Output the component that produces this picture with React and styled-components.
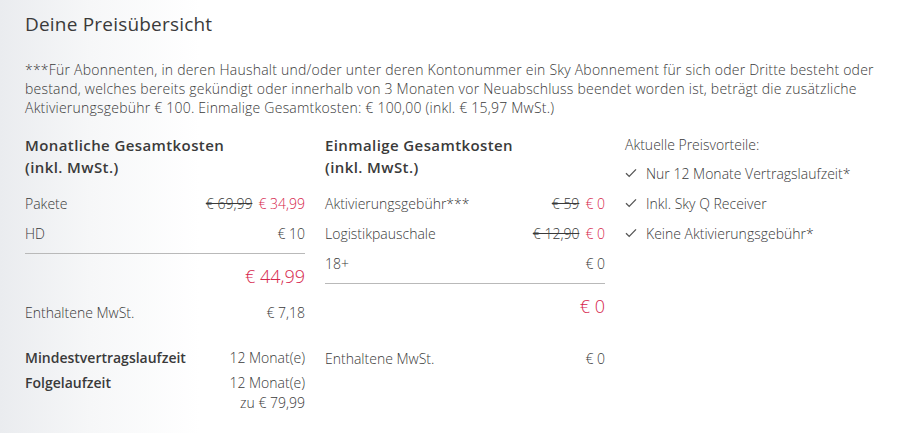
import styled, { createGlobalStyle } from 'styled-components';

const GlobalStyle = createGlobalStyle`
  html, body {
    margin: 0;
    padding: 0;
  }
  body {
    font-family: "Open Sans", "Liberation Sans", sans-serif;
    color: #3a3a3a;
    background: linear-gradient(to right, #eaecef 0px, #f6f7f8 90px, #ffffff 200px);
    min-height: 433px;
  }
`;

const Page = styled.div`
  padding: 12px 25px 0 25px;
  width: 918px;
  box-sizing: border-box;
`;

const Title = styled.h1`
  margin: 0;
  font-size: 19px;
  line-height: 24px;
  font-weight: 400;
  letter-spacing: 0.2px;
  color: #3a3a3a;
`;

const Note = styled.p`
  margin: 24px 0 0 0;
  font-size: 14px;
  line-height: 19px;
  font-weight: 300;
  letter-spacing: 0.22px;
  white-space: nowrap;
`;

const Columns = styled.div`
  display: grid;
  grid-template-columns: 280px 280px 1fr;
  column-gap: 20px;
  margin-top: 17px;
  align-items: start;
`;

const Column = styled.div`
  display: flex;
  flex-direction: column;
`;

const Heading = styled.h2`
  margin: 0 0 10px 0;
  font-size: 15px;
  line-height: 22px;
  font-weight: 600;
  letter-spacing: 0.4px;
  color: #3a3a3a;
`;

const Row = styled.div`
  display: flex;
  justify-content: space-between;
  align-items: center;
  height: 30px;
  font-size: 14px;
  font-weight: 300;
  margin-top: ${(p) => p.$gap || 0}px;
`;

const Prices = styled.span`
  display: flex;
  gap: 6px;
`;

const Old = styled.span`
  text-decoration: line-through;
`;

const Red = styled.span`
  color: #d6264c;
`;

const Divider = styled.hr`
  border: 0;
  border-top: 1px solid #b9b9b9;
  margin: 5px 0 7px 0;
`;

const Total = styled.div`
  text-align: right;
  font-size: 18px;
  line-height: 30px;
  font-weight: 300;
  color: #d6264c;
`;

const Terms = styled.div`
  display: flex;
  flex-direction: column;
  gap: 5px;
  margin-top: 21px;
`;

const TermRow = styled.div`
  display: flex;
  justify-content: space-between;
  font-size: 14px;
  line-height: 20px;
`;

const TermLabel = styled.span`
  font-weight: 600;
`;

const TermValue = styled.span`
  font-weight: 300;
  text-align: right;
`;

const BenefitsTitle = styled.div`
  font-size: 14px;
  line-height: 22px;
  font-weight: 300;
  margin-bottom: 2px;
`;

const Benefit = styled.div`
  display: flex;
  align-items: center;
  gap: 9px;
  height: 30px;
  font-size: 14px;
  font-weight: 300;
`;

const Check = () => (
  <svg width="12" height="10" viewBox="0 0 12 10" fill="none">
    <path d="M1 5.2 L4.2 8.4 L11 1.4" stroke="#555" strokeWidth="1.3" />
  </svg>
);

export default function App() {
  return (
    <>
      <GlobalStyle />
      <Page>
        <Title>Deine Preisübersicht</Title>
        <Note>
          ***Für Abonnenten, in deren Haushalt und/oder unter deren Kontonummer ein Sky Abonnement für sich oder Dritte besteht oder
          <br />
          bestand, welches bereits gekündigt oder innerhalb von 3 Monaten vor Neuabschluss beendet worden ist, beträgt die zusätzliche
          <br />
          Aktivierungsgebühr € 100. Einmalige Gesamtkosten: € 100,00 (inkl. € 15,97 MwSt.)
        </Note>
        <Columns>
          <Column>
            <Heading>
              Monatliche Gesamtkosten
              <br />
              (inkl. MwSt.)
            </Heading>
            <Row>
              <span>Pakete</span>
              <Prices>
                <Old>€ 69,99</Old>
                <Red>€ 34,99</Red>
              </Prices>
            </Row>
            <Row>
              <span>HD</span>
              <span>€ 10</span>
            </Row>
            <Divider />
            <Total>€ 44,99</Total>
            <Row $gap={6}>
              <span>Enthaltene MwSt.</span>
              <span>€ 7,18</span>
            </Row>
            <Terms>
              <TermRow>
                <TermLabel>Mindestvertragslaufzeit</TermLabel>
                <TermValue>12 Monat(e)</TermValue>
              </TermRow>
              <TermRow>
                <TermLabel>Folgelaufzeit</TermLabel>
                <TermValue>
                  12 Monat(e)
                  <br />
                  zu € 79,99
                </TermValue>
              </TermRow>
            </Terms>
          </Column>
          <Column>
            <Heading>
              Einmalige Gesamtkosten
              <br />
              (inkl. MwSt.)
            </Heading>
            <Row>
              <span>Aktivierungsgebühr***</span>
              <Prices>
                <Old>€ 59</Old>
                <Red>€ 0</Red>
              </Prices>
            </Row>
            <Row>
              <span>Logistikpauschale</span>
              <Prices>
                <Old>€ 12,90</Old>
                <Red>€ 0</Red>
              </Prices>
            </Row>
            <Row>
              <span>18+</span>
              <span>€ 0</span>
            </Row>
            <Divider />
            <Total>€ 0</Total>
            <Row $gap={22}>
              <span>Enthaltene MwSt.</span>
              <span>€ 0</span>
            </Row>
          </Column>
          <Column>
            <BenefitsTitle>Aktuelle Preisvorteile:</BenefitsTitle>
            <Benefit>
              <Check />
              Nur 12 Monate Vertragslaufzeit*
            </Benefit>
            <Benefit>
              <Check />
              Inkl. Sky Q Receiver
            </Benefit>
            <Benefit>
              <Check />
              Keine Aktivierungsgebühr*
            </Benefit>
          </Column>
        </Columns>
      </Page>
    </>
  );
}
